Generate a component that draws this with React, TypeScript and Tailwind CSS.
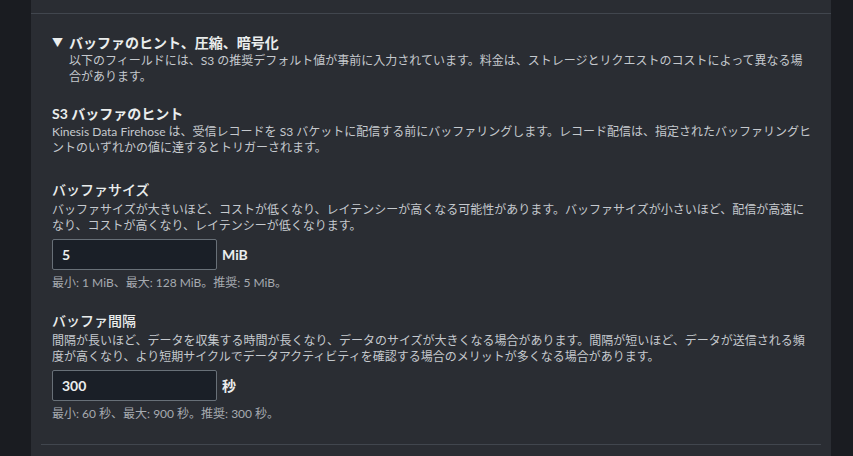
const font = "font-['Lato','Noto_Sans_CJK_JP',sans-serif]";

function Field({
  label,
  desc,
  value,
  unit,
  hint,
}: {
  label: string;
  desc: string;
  value: string;
  unit: string;
  hint: string;
}) {
  return (
    <div className="flex flex-col">
      <div className="text-[14px] leading-[20px] font-medium text-[#eaeded]">{label}</div>
      <div className="mt-[2px] text-[12px] leading-[16px] text-[#c5c9ce]">{desc}</div>
      <div className="mt-[5px] flex items-center gap-[5px]">
        <div className="w-[165px] h-[31px] rounded-[2px] border border-[#687078] bg-[#1a1f27] px-[9px] flex items-center text-[14px] font-bold text-[#eaeded]">
          {value}
        </div>
        <span className="text-[14px] font-bold text-[#eaeded]">{unit}</span>
      </div>
      <div className="mt-[5px] text-[12px] leading-[16px] text-[#a6aab0]">{hint}</div>
    </div>
  );
}

export default function App() {
  return (
    <div className={`w-[853px] h-[456px] overflow-hidden bg-[#1a1c21] flex ${font}`}>
      <div className="ml-[31px] w-[800px] h-full bg-[#2a2d33] flex flex-col">
        <div className="h-[14px] border-b border-[#41464e]" />
        <div className="pl-[21px] pr-[18px] pt-[19px] flex flex-col">
          <div className="flex items-start gap-[7px]">
            <span className="text-[11px] leading-[20px] text-[#eaeded] w-[10px]">▼</span>
            <div className="flex flex-col">
              <div className="text-[14px] leading-[20px] font-bold text-[#eaeded]">
                バッファのヒント、圧縮、暗号化
              </div>
              <div className="text-[12px] leading-[16px] text-[#c5c9ce] pr-[6px]">
                以下のフィールドには、S3 の推奨デフォルト値が事前に入力されています。料金は、ストレージとリクエストのコストによって異なる場合があります。
              </div>
            </div>
          </div>

          <div className="mt-[19px] text-[14px] leading-[20px] font-bold text-[#eaeded]">S3 バッファのヒント</div>
          <div className="text-[12px] leading-[16px] text-[#c5c9ce]">
            Kinesis Data Firehose は、受信レコードを S3 バケットに配信する前にバッファリングします。レコード配信は、指定されたバッファリングヒントのいずれかの値に達するとトリガーされます。
          </div>

          <div className="mt-[24px] flex flex-col gap-[20px]">
            <Field
              label="バッファサイズ"
              desc="バッファサイズが大きいほど、コストが低くなり、レイテンシーが高くなる可能性があります。バッファサイズが小さいほど、配信が高速になり、コストが高くなり、レイテンシーが低くなります。"
              value="5"
              unit="MiB"
              hint="最小: 1 MiB、最大: 128 MiB。推奨: 5 MiB。"
            />
            <Field
              label="バッファ間隔"
              desc="間隔が長いほど、データを収集する時間が長くなり、データのサイズが大きくなる場合があります。間隔が短いほど、データが送信される頻度が高くなり、より短期サイクルでデータアクティビティを確認する場合のメリットが多くなる場合があります。"
              value="300"
              unit="秒"
              hint="最小: 60 秒、最大: 900 秒。推奨: 300 秒。"
            />
          </div>
        </div>
        <div className="mx-[10px] mt-[22px] border-t border-[#41464e]" />
      </div>
    </div>
  );
}
